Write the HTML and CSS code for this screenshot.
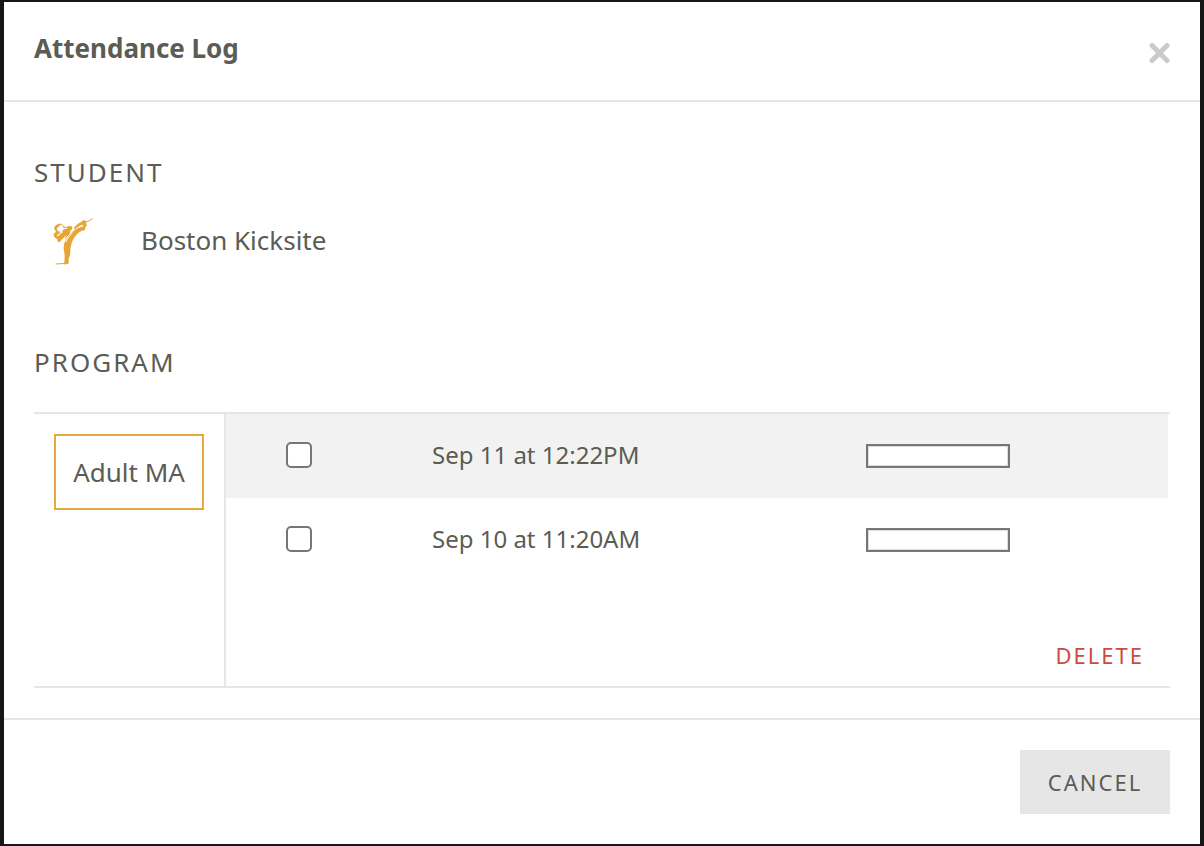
FILE: index.html
```html
<!DOCTYPE html>
<html lang="en">
<head>
<meta charset="utf-8">
<meta name="viewport" content="width=device-width, initial-scale=1">
<title>Attendance Log</title>
<link rel="stylesheet" href="styles.css">
</head>
<body>
<div class="modal" role="dialog" aria-labelledby="modal-title">
  <header class="modal-header">
    <h1 class="modal-title" id="modal-title">Attendance Log</h1>
    <button class="close" type="button" aria-label="Close">
      <svg class="close-icon" viewBox="0 0 22 22" aria-hidden="true"><path d="M4 3.500 19 18.500M19 3.500 4 18.500"/></svg>
    </button>
  </header>
  <main class="modal-body">
    <section class="student">
      <h2 class="section-title">STUDENT</h2>
      <div class="student-row">
        <svg class="avatar" viewBox="0 0 70 70" aria-hidden="true">
          <path d="M25 59.500l.6-5.500c.2-3.500-.2-6.500-.8-9.500-.5-3.500.3-6.500 2-9.500 2.500-4.500 6-8.500 10.500-11 3-1.700 6-2.600 9.200-3l-.4 3.900c-4.600.7-7.600 3.300-10.100 6.700-3.400 4.700-4.600 9.500-4.700 15.400 0 2.800-.6 5-1.600 6.500l-.2 5.200z"/>
          <path d="M22.500 18.800c-3.200-.4-5.800 1-7.500 3.700.3 1.900 1.100 3.300 2.400 4.500-1.900.4-3 1.700-2.700 3.600.6 1.800 2 2.800 3.600 3.700l1.200-2.300c-1-.6-1.500-1.200-1.500-1.900 1.500-.6 2.700-1.600 3.500-3.400-2-.2-3.300-1.300-3.800-2.800 1.200-1.800 2.900-3 4.800-5.100z"/>
          <path d="M23.700 25.300c-1.300 1.700-2.300 4.400-4.800 6.300-1 1.700-.8 4.200.3 5.700 2-.6 4-2 5.200-4.100 1.600-.5 3-1.700 3.300-3.600 1.500-.6 2.200-2 1.500-4.100-1-1.800-4.200-1.800-5.500-.2z"/>
          <path d="M28 22.300c1.300-1.600 3.900-1.700 5.300-.4.300 1.700-.5 3.100-1.800 3.600l-1 3.700c-1.700 1.500-3.200 3-4.500 5.300.2-3.700 1.100-7.600 2-12.200z"/>
          <path d="M42.500 16.800c.8-1.700 2.900-2.200 4.300-1l1 5.700-3.200.3-1.200-2c-3 .9-5.500 2.600-7.700 5l-.8-1.600c2-3 4.300-4.800 7.600-6.400z"/>
          <path class="avatar-gap" d="M21.500 28.500l2.500-2M22 35.500c2-1 3.600-2.800 5-4.900M27 37c1.500-3.800 3.500-6.300 6.500-9.300"/>
          <path class="avatar-line" d="M16.500 59l9-.5M46 17.500c3-1 5.200-2.300 7.600-4M21.500 19c2 .7 3 1.500 3.700 3.200M24 22.500l5-.3"/>
        </svg>
        <span class="student-name">Boston Kicksite</span>
      </div>
    </section>
    <section class="program">
      <h2 class="section-title">PROGRAM</h2>
      <div class="panel">
        <div class="tabs">
          <button class="tab" type="button">Adult MA</button>
        </div>
        <div class="log">
          <table class="entries">
            <tbody>
              <tr class="entry">
                <td class="cell-check"><input class="check" type="checkbox" id="entry-1"></td>
                <td class="cell-date"><label for="entry-1">Sep 11 at 12:22PM</label></td>
                <td class="cell-note"><input class="note" type="text" aria-label="Sep 11 at 12:22PM note"></td>
              </tr>
              <tr class="entry">
                <td class="cell-check"><input class="check" type="checkbox" id="entry-2"></td>
                <td class="cell-date"><label for="entry-2">Sep 10 at 11:20AM</label></td>
                <td class="cell-note"><input class="note" type="text" aria-label="Sep 10 at 11:20AM note"></td>
              </tr>
            </tbody>
          </table>
          <div class="log-actions">
            <button class="delete" type="button">DELETE</button>
          </div>
        </div>
      </div>
    </section>
  </main>
  <footer class="modal-footer">
    <button class="cancel" type="button">CANCEL</button>
  </footer>
</div>
</body>
</html>
```
FILE: styles.css
```css
* { box-sizing: border-box; }

body {
  margin: 0;
  padding: 2px 4px;
  background: #161616;
  color: #5b5c54;
  font: 26px/36px "Noto Sans", "Open Sans", sans-serif;
}

button {
  margin: 0;
  padding: 0;
  border: 0;
  background: none;
  color: inherit;
  font: inherit;
  cursor: pointer;
}

.modal { background: #fff; }

.modal-header {
  display: flex;
  align-items: center;
  justify-content: space-between;
  padding: 28px 30px 34px;
  border-bottom: 2px solid #e6e6e6;
}

.modal-title {
  margin: 0;
  font-size: 26px;
  line-height: 36px;
  font-weight: 700;
}

.close {
  display: flex;
  padding-top: 10px;
}

.close-icon {
  width: 22px;
  height: 22px;
  fill: none;
  stroke: #cacaca;
  stroke-width: 5;
  stroke-linecap: round;
}

.modal-body { padding: 52px 30px 30px; }

.section-title {
  margin: 0;
  font-size: 26px;
  line-height: 36px;
  font-weight: 400;
  letter-spacing: 2px;
}

.student-row {
  display: flex;
  align-items: center;
  gap: 32px;
  padding: 15px 0 0 5px;
}

.avatar {
  width: 70px;
  height: 70px;
  fill: #e6a535;
}

.avatar-gap {
  fill: none;
  stroke: #fff;
  stroke-width: 1;
}

.avatar-line {
  fill: none;
  stroke: #e6a535;
  stroke-width: 1;
}

.program { padding-top: 69px; }

.panel {
  display: flex;
  margin-top: 32px;
  border-top: 2px solid #e6e6e6;
  border-bottom: 2px solid #e6e6e6;
}

.tabs {
  padding: 20px;
  border-right: 2px solid #e6e6e6;
}

.tab {
  width: 150px;
  height: 76px;
  border: 2px solid #e6ab3c;
  white-space: nowrap;
}

.log {
  flex: 1;
  padding-right: 2px;
}

.entries {
  width: 100%;
  border-collapse: collapse;
  table-layout: fixed;
}

.entry { height: 84px; }
.entry:nth-child(odd) { background: #f2f2f2; }

.entry td {
  padding: 0 0 2px;
  vertical-align: middle;
}

.entry .cell-check {
  width: 206px;
  padding-left: 60px;
}

.entry .cell-date { font-size: 24px; }

.entry .cell-note {
  width: 302px;
  padding-bottom: 0;
}

.check {
  display: block;
  appearance: none;
  width: 26px;
  height: 26px;
  margin: 0;
  border: 2px solid #767676;
  border-radius: 5px;
  background: #fff;
}

.check:checked { background: #e6ab3c; }

.note {
  display: block;
  width: 144px;
  height: 24px;
  padding: 0 4px;
  border: 2px solid #767676;
  background: #fff;
  box-shadow: inset 0 0 0 1px #dcdcdc;
  color: inherit;
  font: inherit;
  font-size: 16px;
  line-height: 20px;
}

.log-actions {
  display: flex;
  justify-content: flex-end;
  padding: 62px 24px 20px;
}

.delete {
  color: #cc4b3f;
  font-size: 22px;
  line-height: 22px;
  letter-spacing: 2px;
}

.modal-footer {
  display: flex;
  justify-content: flex-end;
  padding: 30px;
  border-top: 2px solid #e6e6e6;
}

.cancel {
  width: 150px;
  height: 64px;
  background: #e6e6e6;
  font-size: 22px;
  letter-spacing: 2px;
}
```
